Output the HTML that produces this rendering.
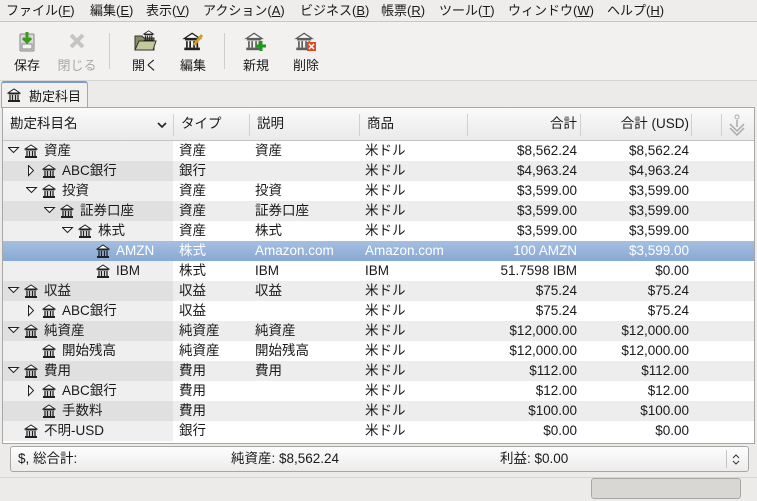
<!DOCTYPE html>
<html><head><meta charset="utf-8"><style>
*{margin:0;padding:0;box-sizing:border-box}
body{width:757px;height:501px;background:#edebe9;font-family:"Liberation Sans","Noto Sans CJK JP",sans-serif;font-size:13px;color:#1a1a1a;position:relative;overflow:hidden}
.a{position:absolute;white-space:nowrap}
.menu{left:0;top:0;width:757px;height:22px;background:#efedeb;border-bottom:1px solid #c9c7c4}
.menu span{position:absolute;top:0;line-height:22px}
.tb{top:22px;left:0;width:757px;height:58px;background:#f2f1f0}
.btn{position:absolute;top:30px;text-align:center;width:40px}
.btn .l{position:absolute;top:25px;left:0;width:40px;text-align:center}
.sep{position:absolute;top:33px;width:1px;height:36px;background:#cfcdca}
.tree{left:2px;top:107px;width:753px;height:337px;background:#fff;border:1px solid #a9a7a4;font-size:13.5px}
.hdr{position:absolute;left:0;top:0;width:751px;height:33px;background:linear-gradient(#fafafa,#eaeaea);border-bottom:1px solid #c5c5c5}
.hdr span{position:absolute;top:0;line-height:32px}
.hs{position:absolute;top:6px;width:1px;height:22px;background:#d0d0d0}
.row{position:absolute;left:0;width:751px;height:20px}
.row span{position:absolute;top:0;line-height:20px;height:20px}
.r{text-align:right}
.ex{position:absolute;top:6px}
.sum{left:10px;top:446px;width:739px;height:26px;border:1px solid #a9a7a4;border-radius:3px;background:linear-gradient(#fdfdfd,#ececec);font-size:13.5px}
.sum span{position:absolute;top:0;line-height:24px}
</style></head><body>
<svg width="0" height="0" style="position:absolute"><defs>
<g id="bk"><path d="M1 5 L7 1 L13 5 Z" fill="#fff" stroke="#222" stroke-width="1"/><rect x="1.5" y="5" width="11" height="1.5" fill="#222"/><path d="M3 7v5M5.5 7v5M8.5 7v5M11 7v5" stroke="#222" stroke-width="1.3"/><rect x="1" y="12" width="12" height="2" fill="#222"/></g>
<g id="dn"><path d="M0.5 0.5 H10.5 L5.5 5.5 Z" fill="#fff" stroke="#222"/></g>
<g id="rt"><path d="M0.5 0.5 V10.5 L5.5 5.5 Z" fill="#fff" stroke="#222"/></g>
</defs></svg>
<div class="a menu">
<span style="left:6px">ファイル(<u>F</u>)</span><span style="left:90px">編集(<u>E</u>)</span><span style="left:146px">表示(<u>V</u>)</span><span style="left:203px">アクション(<u>A</u>)</span><span style="left:300px">ビジネス(<u>B</u>)</span><span style="left:381px">帳票(<u>R</u>)</span><span style="left:439px">ツール(<u>T</u>)</span><span style="left:508px">ウィンドウ(<u>W</u>)</span><span style="left:607px">ヘルプ(<u>H</u>)</span>
</div>
<div class="a tb"></div>
<div class="btn" style="left:7px"><svg width="22" height="22" style="margin-top:1px"><rect x="4" y="3" width="14" height="17" rx="1" fill="#d8d8d8" stroke="#888"/><rect x="6" y="13" width="10" height="5" fill="#f4f4f4" stroke="#888"/><path d="M11 1v9M7 7l4 4 4-4" stroke="#3a9a1a" stroke-width="3" fill="none"/></svg><div class="l">保存</div></div>
<div class="btn" style="left:57px;color:#a8a8a8"><svg width="22" height="22"><path d="M5 5L17 17M17 5L5 17" stroke="#c4c4c4" stroke-width="4"/></svg><div class="l">閉じる</div></div>
<div class="sep" style="left:109px"></div>
<div class="btn" style="left:125px"><svg width="24" height="22"><path d="M2 6h7l2 2h10v12H2z" fill="#8a8c60" stroke="#333"/><path d="M2 20l4-9h17l-3 9z" fill="#c5c89a" stroke="#333"/><g transform="translate(10,0) scale(0.8)"><use href="#bk"/></g></svg><div class="l">開く</div></div>
<div class="btn" style="left:173px"><svg width="24" height="22"><g transform="translate(2,2) scale(1.3)"><use href="#bk"/></g><path d="M13 15l8-10" stroke="#d0a020" stroke-width="3"/></svg><div class="l">編集</div></div>
<div class="sep" style="left:224px"></div>
<div class="btn" style="left:236px"><svg width="24" height="22"><g transform="translate(1,2) scale(1.3)" opacity=".7"><use href="#bk"/></g><path d="M17 11v10M12 16h10" stroke="#1a9a1a" stroke-width="3"/></svg><div class="l">新規</div></div>
<div class="btn" style="left:286px"><svg width="24" height="22"><g transform="translate(1,2) scale(1.3)" opacity=".7"><use href="#bk"/></g><rect x="13" y="12" width="9" height="9" fill="#e04a20"/><path d="M15 14l5 5M20 14l-5 5" stroke="#fff" stroke-width="1.5"/></svg><div class="l">削除</div></div>
<div class="a" style="left:0;top:80px;width:757px;height:1px;background:#d8d6d3"></div>
<div class="a" style="left:1px;top:81px;width:87px;height:27px;background:#f1f0ef;border:1px solid #a9a7a4;border-bottom:none;border-top:2px solid #7a9cc8;border-radius:3px 3px 0 0"></div>
<svg class="a" style="left:7px;top:88px" width="14" height="14"><use href="#bk"/></svg>
<div class="a" style="left:29px;top:86px">勘定科目</div>
<div class="a tree">
<div class="hdr"><span style="left:7px">勘定科目名</span><svg style="position:absolute;left:154px;top:14px" width="10" height="6"><path d="M1 1l4 4 4-4" stroke="#222" stroke-width="1.6" fill="none"/></svg><div class="hs" style="left:170px"></div><span style="left:178px">タイプ</span><div class="hs" style="left:246px"></div><span style="left:254px">説明</span><div class="hs" style="left:356px"></div><span style="left:364px">商品</span><div class="hs" style="left:464px"></div><span style="left:470px;width:104px;text-align:right">合計</span><div class="hs" style="left:577px"></div><span style="left:576px;width:110px;text-align:right">合計 (USD)</span><div class="hs" style="left:688px"></div><div class="hs" style="left:718px"></div><svg style="position:absolute;left:724px;top:6px" width="20" height="22"><circle cx="10" cy="3" r="2" fill="none" stroke="#aaa"/><path d="M10 6v7M3 10l7 7 7-7M3 14l7 7 7-7" stroke="#aaa" fill="none" stroke-width="1.5"/></svg></div>
<div id="rows"></div>
</div>
<div class="a sum"><span style="left:7px">$, 総合計:</span><span style="left:220px">純資産: $8,562.24</span><span style="left:489px">利益: $0.00</span><div style="position:absolute;left:715px;top:3px;width:1px;height:18px;background:#c5c5c5"></div><svg style="position:absolute;left:721px;top:7px" width="8" height="11"><path d="M1 4l3-3 3 3M1 7l3 3 3-3" stroke="#333" fill="none"/></svg></div>
<div class="a" style="left:0;top:477px;width:757px;height:1px;background:#d8d6d3"></div>
<div class="a" style="left:591px;top:478px;width:150px;height:21px;border:1px solid #a9a7a4;border-radius:3px;background:#d9d7d4"></div>
<script>
var R=[[0,1,'資産','資産','資産','米ドル','$8,562.24','$8,562.24'],[1,0,'ABC銀行','銀行','','米ドル','$4,963.24','$4,963.24'],[1,1,'投資','資産','投資','米ドル','$3,599.00','$3,599.00'],[2,1,'証券口座','資産','証券口座','米ドル','$3,599.00','$3,599.00'],[3,1,'株式','資産','株式','米ドル','$3,599.00','$3,599.00'],[4,2,'AMZN','株式','Amazon.com','Amazon.com','100 AMZN','$3,599.00'],[4,2,'IBM','株式','IBM','IBM','51.7598 IBM','$0.00'],[0,1,'収益','収益','収益','米ドル','$75.24','$75.24'],[1,0,'ABC銀行','収益','','米ドル','$75.24','$75.24'],[0,1,'純資産','純資産','純資産','米ドル','$12,000.00','$12,000.00'],[1,2,'開始残高','純資産','開始残高','米ドル','$12,000.00','$12,000.00'],[0,1,'費用','費用','費用','米ドル','$112.00','$112.00'],[1,0,'ABC銀行','費用','','米ドル','$12.00','$12.00'],[1,2,'手数料','費用','','米ドル','$100.00','$100.00'],[0,2,'不明-USD','銀行','','米ドル','$0.00','$0.00']];
var h='';R.forEach(function(r,i){var t=33+i*20,sel=i==5,g=i%2==1;
var bg=sel?'linear-gradient(#a5bfe0,#87a9d6)':(g?'#ededed':'#fff');var nb=sel?'transparent':(g?'#e0e0e0':'#efefef');var c=sel?'color:#fff;':'';
var x=r[0]*18;var ex='';if(r[1]==1)ex='<svg class="ex" style="left:'+(5+x)+'px" width="12" height="7"><use href="#dn"/></svg>';if(r[1]==0)ex='<svg class="ex" style="left:'+(7+x)+'px;top:4px" width="7" height="12"><use href="#rt"/></svg>';
h+='<div class="row" style="top:'+t+'px;background:'+bg+';'+c+'"><div style="position:absolute;left:0;top:0;width:170px;height:20px;background:'+nb+'"></div>'+ex+'<svg style="position:absolute;left:'+(21+x)+'px;top:3px" width="14" height="14"><use href="#bk"/></svg><span style="left:'+(41+x)+'px">'+r[2]+'</span><span style="left:176px">'+r[3]+'</span><span style="left:252px">'+r[4]+'</span><span style="left:362px">'+r[5]+'</span><span class="r" style="left:466px;width:108px">'+r[6]+'</span><span class="r" style="left:576px;width:110px">'+r[7]+'</span></div>';});
document.getElementById('rows').innerHTML=h;
</script>
</body></html>
